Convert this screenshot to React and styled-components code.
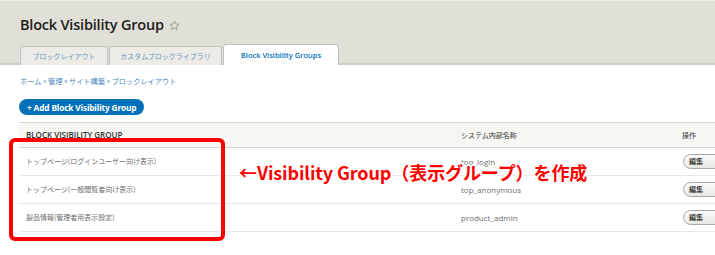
import React from 'react';
import styled, { createGlobalStyle } from 'styled-components';

const Global = createGlobalStyle`
  html, body {
    margin: 0;
    padding: 0;
    background: #fff;
    overflow: hidden;
  }
  body {
    font-family: "Open Sans", "Noto Sans CJK JP", sans-serif;
    color: #333;
  }
`;

const Page = styled.div`
  position: relative;
  width: 715px;
  height: 255px;
  overflow: hidden;
`;

const Header = styled.div`
  background: #e0dfd8;
  border-top: 1px solid #ebeae5;
  border-bottom: 2px solid #cfcfc6;
  height: 62px;
  padding: 0 0 0 20px;
  display: flex;
  flex-direction: column;
  justify-content: flex-end;
`;

const Title = styled.h1`
  margin: 0 0 10px;
  font-family: "Open Sans", sans-serif;
  font-size: 14.5px;
  font-weight: 600;
  color: #1d1d1d;
  letter-spacing: -0.2px;
  display: flex;
  align-items: center;
  gap: 5px;
  line-height: 18px;
`;

const Star = styled.svg`
  width: 11px;
  height: 11px;
`;

const Tabs = styled.div`
  display: flex;
  align-items: flex-end;
  gap: 1px;
`;

const Tab = styled.div`
  width: ${(p) => p.$w}px;
  box-sizing: border-box;
  display: flex;
  align-items: center;
  justify-content: center;
  border: 1px solid #c4c3bb;
  border-bottom: none;
  border-radius: 3px 3px 0 0;
  background: ${(p) => (p.$active ? '#fff' : '#ecebe5')};
  color: ${(p) => (p.$active ? '#0071b3' : '#6b97c2')};
  font-family: ${(p) => (p.$active ? '"Open Sans", sans-serif' : '"Noto Sans CJK JP", sans-serif')};
  font-size: ${(p) => (p.$active ? '7.5px' : '7px')};
  font-weight: ${(p) => (p.$active ? 600 : 400)};
  margin-bottom: -2px;
  height: ${(p) => (p.$active ? '21px' : '19px')};
  white-space: nowrap;
`;

const Content = styled.div`
  padding: 0 0 0 19px;
`;

const Breadcrumb = styled.div`
  margin: 10px 0 0 1px;
  font-family: "Noto Sans CJK JP", sans-serif;
  font-size: 7.2px;
  color: #4a86bd;
  line-height: 12px;
  height: 12px;
`;

const AddButton = styled.div`
  display: inline-flex;
  align-items: center;
  margin-top: 12px;
  height: 16px;
  padding: 0 8px;
  border-radius: 9px;
  background: #0071b9;
  color: #fff;
  font-family: "Open Sans", sans-serif;
  font-size: 8.3px;
  font-weight: 700;
  letter-spacing: -0.15px;
`;

const Table = styled.div`
  margin-top: 6px;
  width: 740px;
  border-top: 1px solid #d8d8d2;
`;

const Row = styled.div`
  display: grid;
  grid-template-columns: 435px 221px 84px;
  height: ${(p) => (p.$head ? 24 : 27)}px;
  align-items: center;
  background: ${(p) => (p.$head ? '#f6f6f3' : '#fff')};
  border-bottom: 1px solid ${(p) => (p.$head ? '#d8d8d2' : '#e8e8e6')};
`;

const Cell = styled.div`
  padding-left: 7px;
  font-family: ${(p) => (p.$jp ? '"Noto Sans CJK JP", sans-serif' : '"Open Sans", "Noto Sans CJK JP", sans-serif')};
  font-size: ${(p) => (p.$jp ? '7px' : '8px')};
  color: ${(p) => (p.$head ? '#333' : '#6e6e6e')};
  font-weight: ${(p) => (p.$bold ? 600 : 400)};
  white-space: nowrap;
`;

const EditButton = styled.div`
  margin-left: 8px;
  width: 40px;
  height: 15px;
  border: 1px solid #a8a8a4;
  border-radius: 8px;
  background: linear-gradient(#fcfcfa, #e8e8e3);
  font-family: "Noto Sans CJK JP", sans-serif;
  font-size: 7px;
  font-weight: 700;
  color: #444;
  display: flex;
  align-items: center;
  padding-left: 5px;
  box-sizing: border-box;
`;

const Highlight = styled.div`
  position: absolute;
  left: 9px;
  top: 138px;
  width: 216px;
  height: 103px;
  box-sizing: border-box;
  border: 4px solid #ff0000;
  border-radius: 6px;
`;

const Note = styled.div`
  position: absolute;
  left: 239px;
  top: 159px;
  font-family: "Noto Sans CJK JP", sans-serif;
  font-size: 18px;
  font-weight: 700;
  color: #ff0000;
  white-space: nowrap;
  letter-spacing: -0.1px;
  text-shadow: 2px 0 #fff, -2px 0 #fff, 0 2px #fff, 0 -2px #fff, 1px 1px #fff, -1px -1px #fff, 1px -1px #fff, -1px 1px #fff;
`;

const rows = [
  ['トップページ(ログインユーザー向け表示)', 'top_login'],
  ['トップページ(一般閲覧者向け表示)', 'top_anonymous'],
  ['製品情報(管理者用表示設定)', 'product_admin'],
];

export default function App() {
  return (
    <Page>
      <Global />
      <Header>
        <Title>
          Block Visibility Group
          <Star viewBox="0 0 24 24">
            <path
              d="M12 2.5l2.9 6.3 6.9.7-5.2 4.6 1.5 6.8L12 17.4l-6.1 3.5 1.5-6.8-5.2-4.6 6.9-.7z"
              fill="none"
              stroke="#8a8a84"
              strokeWidth="1.6"
              strokeLinejoin="round"
            />
          </Star>
        </Title>
        <Tabs>
          <Tab $w={88}>ブロックレイアウト</Tab>
          <Tab $w={113}>カスタムブロックライブラリ</Tab>
          <Tab $w={116} $active>Block Visibility Groups</Tab>
        </Tabs>
      </Header>
      <Content>
        <Breadcrumb>ホーム » 管理 » サイト構築 » ブロックレイアウト</Breadcrumb>
        <AddButton>+ Add Block Visibility Group</AddButton>
        <Table>
          <Row $head>
            <Cell $head $bold>BLOCK VISIBILITY GROUP</Cell>
            <Cell $head $jp>システム内部名称</Cell>
            <Cell $head $jp>操作</Cell>
          </Row>
          {rows.map(([label, id]) => (
            <Row key={id}>
              <Cell $jp>{label}</Cell>
              <Cell>{id}</Cell>
              <div>
                <EditButton>編集</EditButton>
              </div>
            </Row>
          ))}
        </Table>
      </Content>
      <Highlight />
      <Note>←Visibility Group（表示グループ）を作成</Note>
    </Page>
  );
}
